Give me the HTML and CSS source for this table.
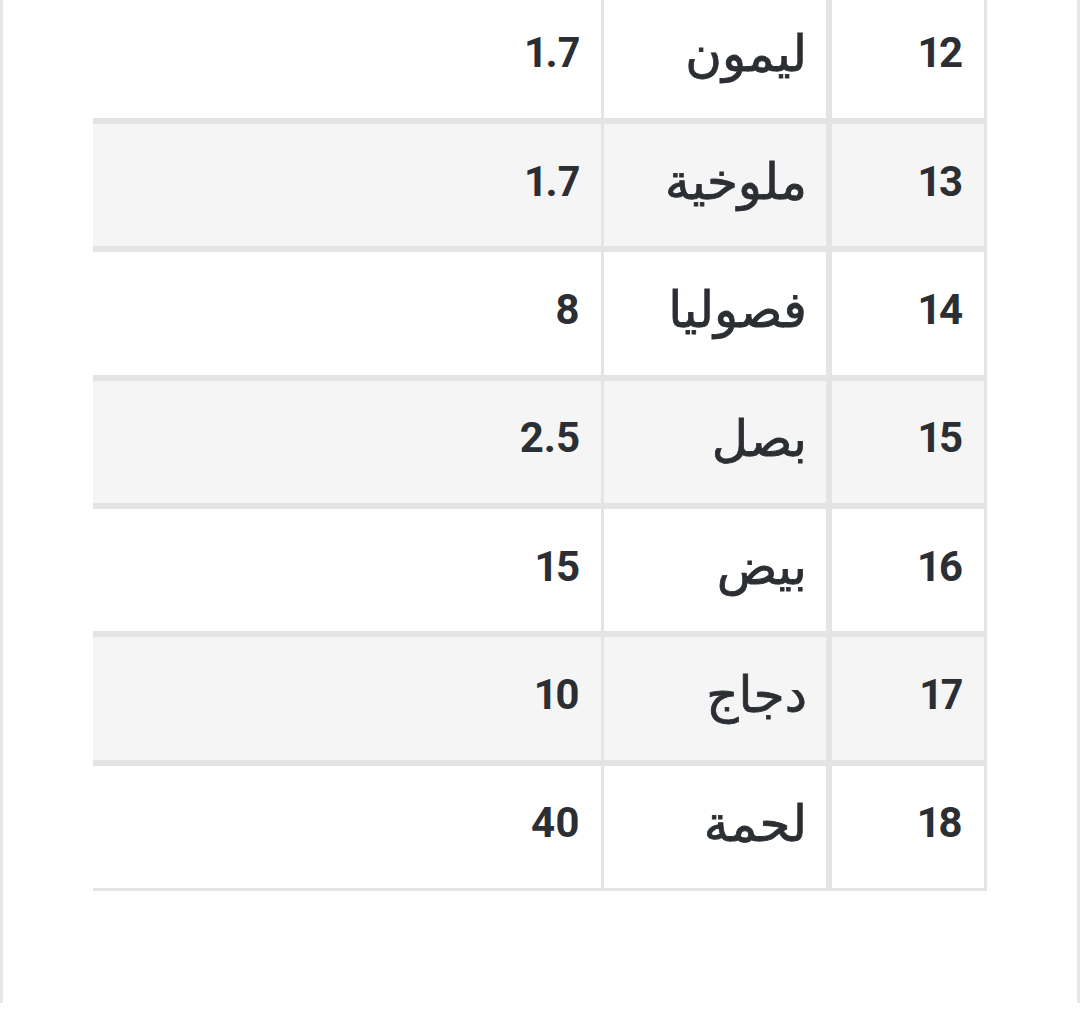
FILE: index.html
```html
<!DOCTYPE html>
<html lang="ar" dir="rtl">
<head>
<meta charset="utf-8">
<title>الأسعار</title>
<link rel="stylesheet" href="styles.css">
</head>
<body>
<div class="page">
  <table class="prices">
    <tbody>
      <tr><td class="num">12</td><td class="name">ليمون</td><td class="val">1.7</td></tr>
      <tr class="alt"><td class="num">13</td><td class="name">ملوخية</td><td class="val">1.7</td></tr>
      <tr><td class="num">14</td><td class="name">فصوليا</td><td class="val">8</td></tr>
      <tr class="alt"><td class="num">15</td><td class="name">بصل</td><td class="val">2.5</td></tr>
      <tr><td class="num">16</td><td class="name">بيض</td><td class="val">15</td></tr>
      <tr class="alt"><td class="num">17</td><td class="name">دجاج</td><td class="val">10</td></tr>
      <tr><td class="num">18</td><td class="name">لحمة</td><td class="val">40</td></tr>
    </tbody>
  </table>
</div>
</body>
</html>
```

FILE: styles.css
```css
html, body {
  margin: 0;
  padding: 0;
  background: #ffffff;
}

body {
  font-family: Roboto, "DejaVu Sans", sans-serif;
  color: #2b2e32;
  overflow: hidden;
}

.page {
  box-sizing: border-box;
  min-height: 1010px;
  border-left: 3px solid #e6e6e6;
  border-right: 3px solid #e6e6e6;
  padding: 0 90px;
}

.prices {
  direction: rtl;
  width: 894px;
  border-collapse: separate;
  border-spacing: 0;
  table-layout: fixed;
  margin-top: -7.33px;
}

.prices tr {
  height: 128.33px;
}

.prices td {
  padding: 0 21px 6px;
  border-top: 3px solid #e4e4e4;
  border-bottom: 3px solid #e4e4e4;
  text-align: right;
  vertical-align: middle;
  font-size: 42px;
  font-weight: 700;
  line-height: 1.4;
  white-space: nowrap;
  font-feature-settings: "pnum" 1;
  font-variant-numeric: proportional-nums;
}

.prices tr.alt td {
  background: #f5f5f5;
}

.prices td.num {
  width: 110px;
  border-right: 3px solid #e4e4e4;
  border-left: 3px solid #e4e4e4;
}

.prices td.name {
  width: 182px;
  padding-right: 19px;
  border-right: 3px solid #e4e4e4;
  border-left: 3px solid #e4e4e4;
  font-size: 50px;
  font-weight: 400;
  line-height: 1.2;
  -webkit-text-stroke: 0.8px #2b2e32;
}

.prices td.val {
  width: auto;
}
```
